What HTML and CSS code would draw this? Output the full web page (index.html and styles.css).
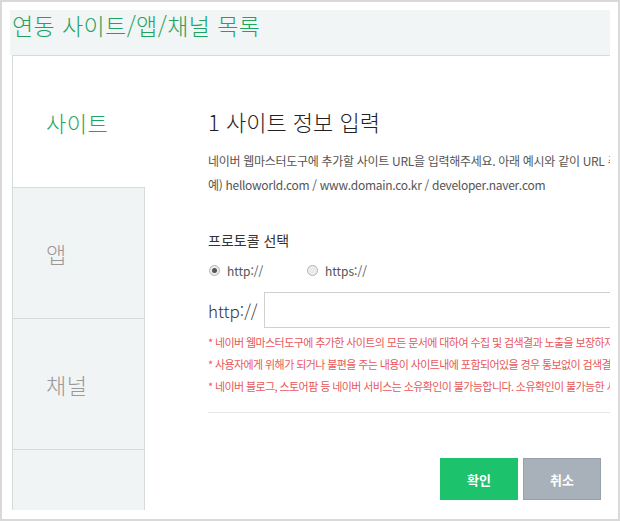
FILE: index.html
```html
<!DOCTYPE html>
<html lang="ko">
<head>
    <meta charset="UTF-8">
    <title>연동 사이트/앱/채널 목록</title>
    <link rel="stylesheet" href="styles.css">
</head>
<body>
    <div class="frame">
        <div class="page-head">
            <h1>연동 사이트/앱/채널 목록</h1>
        </div>

        <div class="panel">
            <ul class="tabs">
                <li class="tab active">사이트</li>
                <li class="tab">앱</li>
                <li class="tab">채널</li>
                <li class="tab-rest"></li>
            </ul>

            <div class="content">
                <h2>1 사이트 정보 입력</h2>
                <p class="desc">네이버 웹마스터도구에 추가할 사이트 URL을 입력해주세요. 아래 예시와 같이 URL 주소를 입력합니다.</p>
                <p class="desc">예) helloworld.com / www.domain.co.kr / developer.naver.com</p>

                <h3>프로토콜 선택</h3>
                <div class="radios">
                    <label class="radio"><span class="dot checked"></span>http://</label>
                    <label class="radio"><span class="dot"></span>https://</label>
                </div>

                <div class="url-row">
                    <span class="prefix">http://</span>
                    <input type="text" class="url-input">
                </div>

                <ul class="notes">
                    <li>* 네이버 웹마스터도구에 추가한 사이트의 모든 문서에 대하여 수집 및 검색결과 노출을 보장하지 않습니다.</li>
                    <li>* 사용자에게 위해가 되거나 불편을 주는 내용이 사이트내에 포함되어있을 경우 통보없이 검색결과에서 제외될 수 있습니다.</li>
                    <li>* 네이버 블로그, 스토어팜 등 네이버 서비스는 소유확인이 불가능합니다. 소유확인이 불가능한 서비스는 추가할 수 없습니다.</li>
                </ul>

                <div class="buttons">
                    <button class="btn ok">확인</button>
                    <button class="btn cancel">취소</button>
                </div>
            </div>
        </div>
    </div>
</body>
</html>
```

FILE: styles.css
```css
* {
    margin: 0;
    padding: 0;
    box-sizing: border-box;
}
body {
    font-family: "Noto Sans CJK KR", "Noto Sans", sans-serif;
    background: #fff;
    color: #333;
}
.frame {
    width: 620px;
    height: 521px;
    border: 2px solid #d9d9d9;
    padding: 8px 8px 9px 8px;
    display: flex;
    flex-direction: column;
}
.page-head {
    height: 45px;
    background: #f2f5f6;
    padding: 0 0 0 2px;
}
.page-head h1 {
    font-size: 23px;
    font-weight: 300;
    line-height: 30px;
    color: #1ea45e;
    letter-spacing: 0.4px;
}
.panel {
    flex: 1;
    margin-left: 2px;
    display: flex;
    background: #fff;
    border-left: 1px solid #d5dadd;
    border-top: 1px solid #d5dadd;
    overflow: hidden;
}
/* left tabs */
.tabs {
    list-style: none;
    width: 132px;
    display: flex;
    flex-direction: column;
    flex-shrink: 0;
}
.tab {
    height: 131px;
    display: flex;
    align-items: center;
    padding-left: 33px;
    font-size: 22px;
    font-weight: 300;
    line-height: 26px;
    letter-spacing: 0.5px;
    color: #999;
    background: #f1f4f5;
    border-top: 1px solid #d5dadd;
    border-right: 1px solid #d5dadd;
}
.tab.active {
    background: #fff;
    color: #1ea45e;
    border-top: none;
    border-right: none;
}
.tab-rest {
    flex: 1;
    background: #f1f4f5;
    border-top: 1px solid #d5dadd;
    border-right: 1px solid #d5dadd;
}
/* main form */
.content {
    flex: 1;
    padding: 52px 0 0 63px;
    min-width: 0;
}
.content h2 {
    font-size: 22px;
    font-weight: 300;
    line-height: 26px;
    color: #222;
    margin-bottom: 15px;
    white-space: nowrap;
}
.desc {
    font-size: 12px;
    line-height: 24px;
    color: #555;
    letter-spacing: -0.3px;
    white-space: nowrap;
}
.content h3 {
    font-size: 14px;
    font-weight: normal;
    line-height: 20px;
    color: #333;
    margin-top: 33px;
}
.radios {
    display: flex;
    margin-top: 10px;
    height: 20px;
    align-items: center;
}
.radio {
    display: flex;
    align-items: center;
    font-size: 12px;
    color: #555;
    width: 98px;
    padding-left: 1px;
}
.dot {
    width: 11px;
    height: 11px;
    border-radius: 50%;
    border: 1px solid #b5b5b5;
    background: #ececec;
    margin-right: 7px;
    display: flex;
    align-items: center;
    justify-content: center;
}
.dot.checked::after {
    content: "";
    width: 5px;
    height: 5px;
    border-radius: 50%;
    background: #555;
}
.url-row {
    display: flex;
    align-items: center;
    margin-top: 12px;
}
.prefix {
    font-size: 17px;
    font-weight: 300;
    color: #333;
    width: 56px;
    flex-shrink: 0;
}
.url-input {
    width: 400px;
    flex-shrink: 0;
    height: 36px;
    border: 1px solid #d0d0d0;
    outline: none;
}
.notes {
    list-style: none;
    margin-top: 3px;
    padding-bottom: 15px;
    border-bottom: 1px solid #e6e6e6;
    width: 420px;
}
.notes li {
    font-size: 11px;
    line-height: 22px;
    color: #e8585a;
    letter-spacing: -0.6px;
    white-space: nowrap;
}
.buttons {
    display: flex;
    gap: 5px;
    margin-top: 45px;
    padding-left: 232px;
}
.btn {
    width: 78px;
    height: 42px;
    border: none;
    color: #fff;
    font-family: inherit;
    font-size: 13px;
    font-weight: bold;
}
.btn.ok {
    background: #1cc26c;
}
.btn.cancel {
    background: #a8b1b9;
    border: 1px solid #98a1a9;
}
```
